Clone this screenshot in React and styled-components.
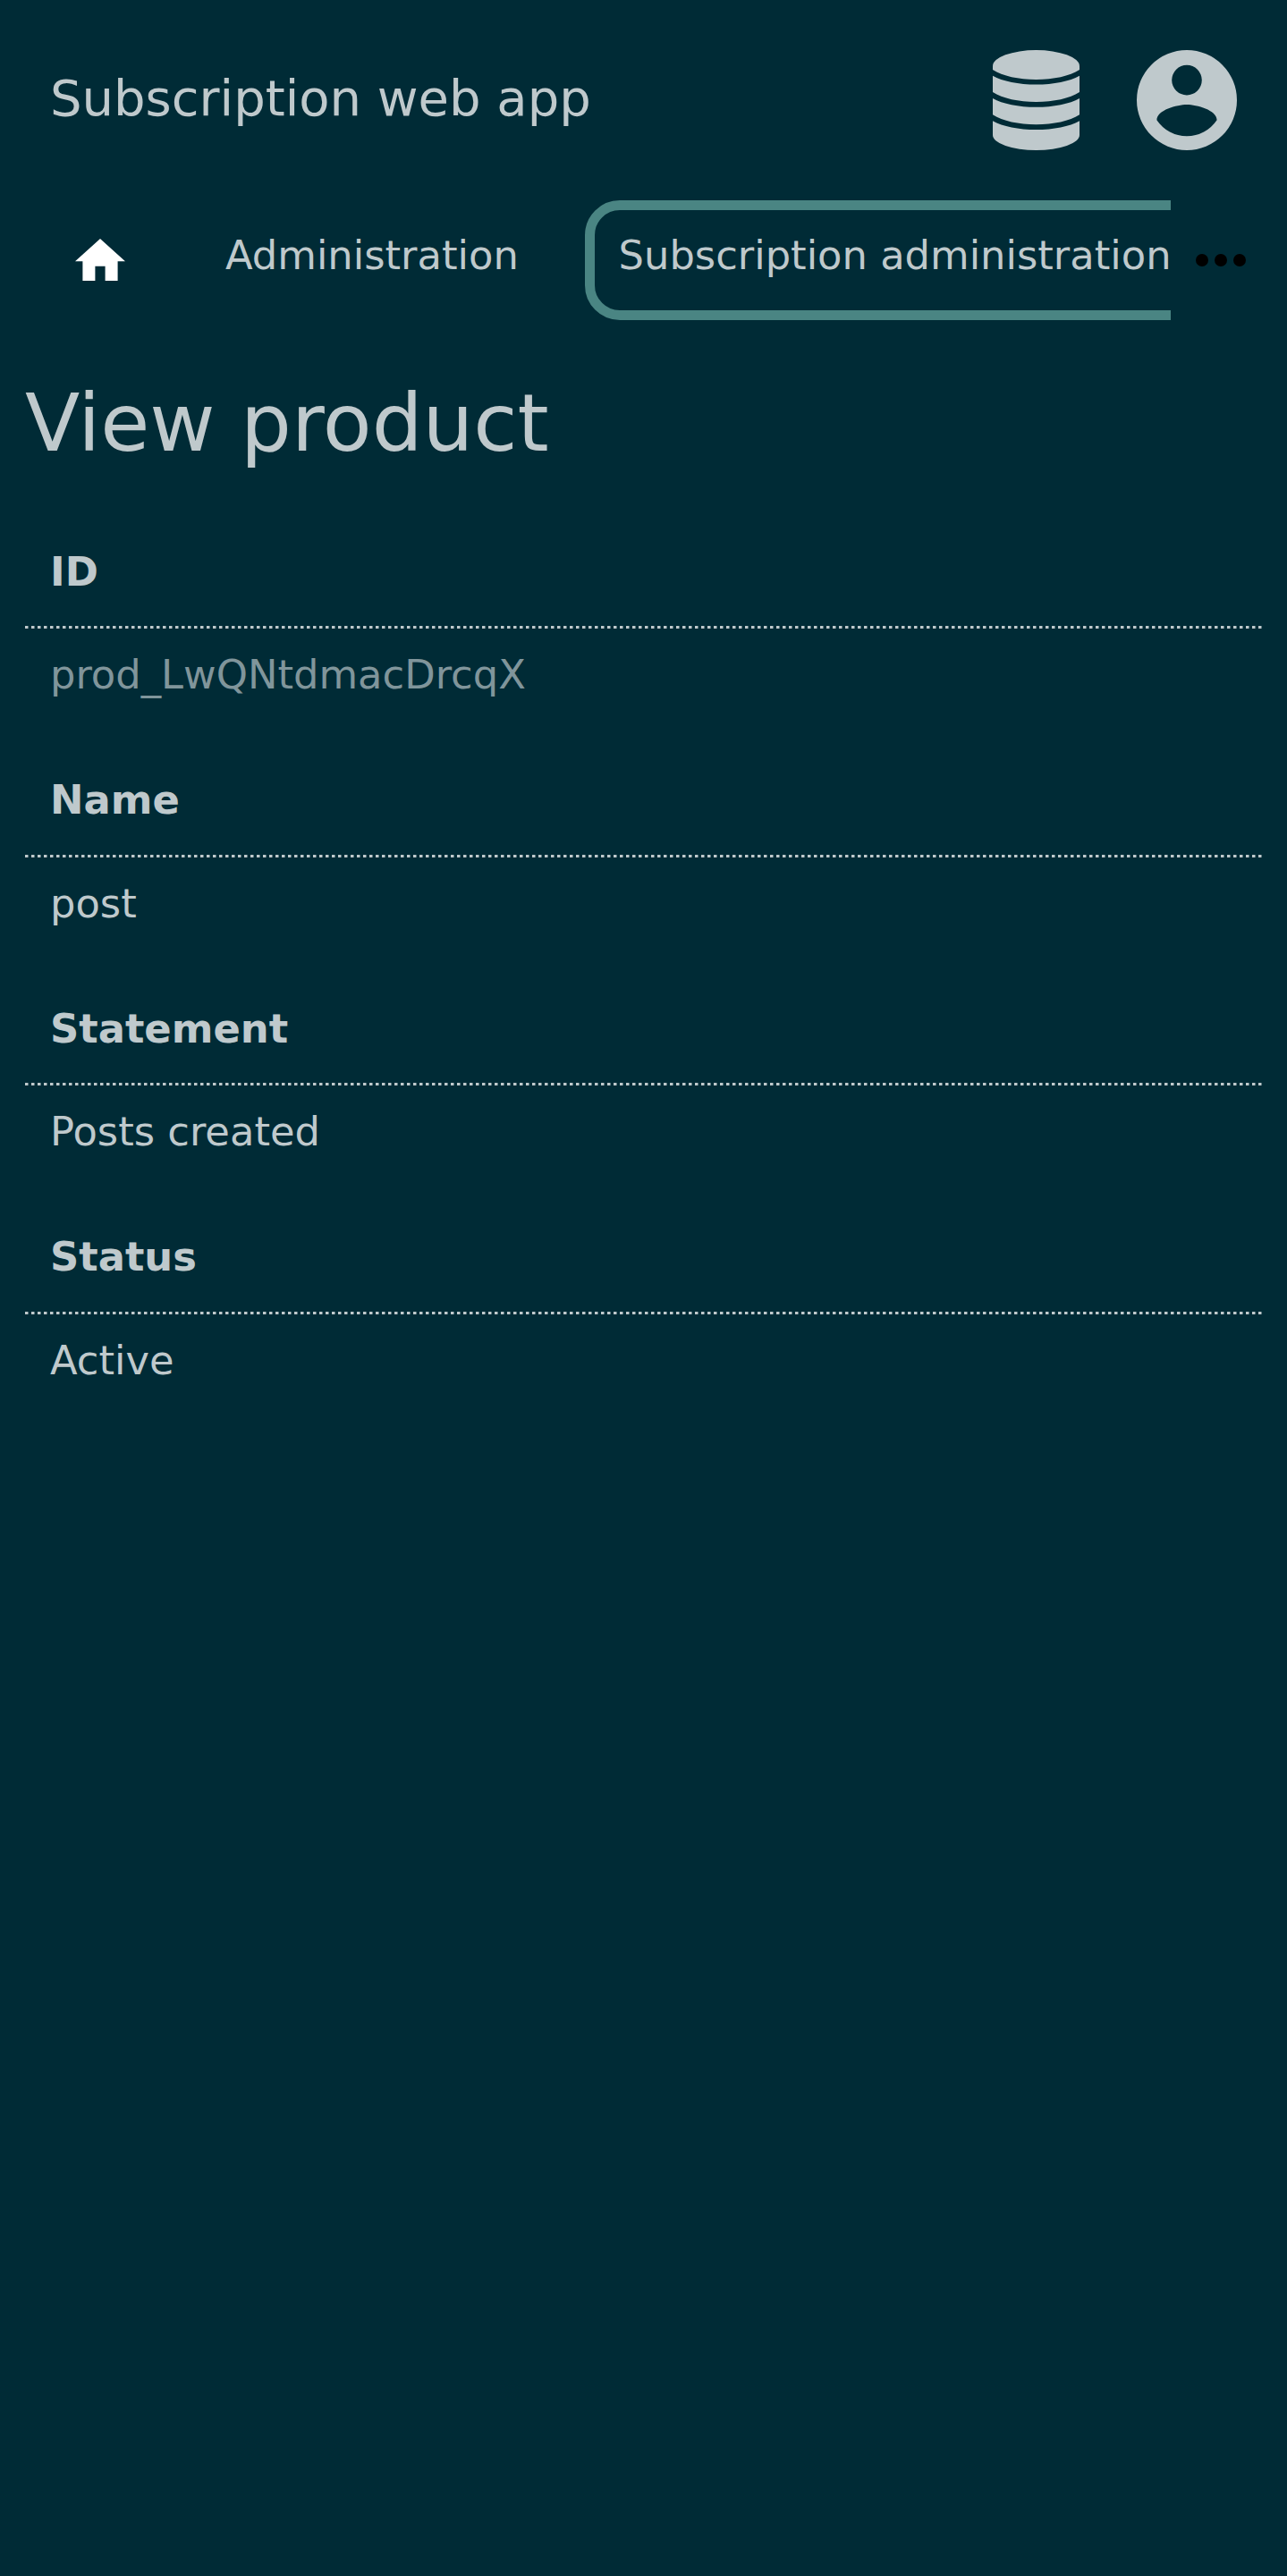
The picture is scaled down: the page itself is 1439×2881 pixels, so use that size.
import React from 'react';
import styled, { createGlobalStyle } from 'styled-components';

const Global = createGlobalStyle`
  html, body { margin: 0; background: #002b36; }
  body { color: #bfc9cc; font-family: "DejaVu Sans", sans-serif; font-size: 44.8px; line-height: 53px; }
`;

const Page = styled.div`
  min-height: 2881px;
  overflow: hidden;
`;

const Header = styled.header`
  display: flex;
  align-items: center;
  height: 224px;
  box-sizing: border-box;
  padding: 0 56px;
`;

const AppName = styled.div`
  flex: 1;
  font-size: 56px;
  line-height: 65px;
  padding-bottom: 5px;
`;

const DatabaseIcon = styled.svg`
  width: 97px;
  height: 112px;
  margin-right: 64px;
  fill: #bfc9cc;
`;

const AccountIcon = styled.svg`
  width: 112px;
  height: 112px;
  fill: #bfc9cc;
`;

const NavBar = styled.div`
  display: flex;
  height: 134px;
`;

const Tabs = styled.nav`
  display: flex;
  flex: 1;
  min-width: 0;
  overflow: hidden;
`;

const Tab = styled.a`
  flex: none;
  box-sizing: border-box;
  height: 134px;
  margin-right: 36.6px;
  padding: 24px 26.6px 0;
  border: 11px solid ${(p) => (p.$active ? '#4a8583' : 'transparent')};
  border-radius: 39px;
  white-space: nowrap;
`;

const HomeTab = styled.a`
  flex: none;
  display: flex;
  align-items: center;
  width: 214.4px;
  box-sizing: border-box;
  padding: 0 0 1px 84px;
`;

const HomeIcon = styled.svg`
  width: 56px;
  height: 47.6px;
  fill: #fff;
`;

const More = styled.button`
  display: flex;
  align-items: center;
  width: 130px;
  border: 0;
  padding: 0 0 1px 28px;
  background: none;
`;

const MoreIcon = styled.svg`
  width: 56px;
  height: 14px;
  fill: #000;
`;

const Main = styled.main`
  padding: 63px 28px 0;
`;

const Title = styled.h1`
  margin: 0 0 87.7px;
  font-size: 89.6px;
  font-weight: 400;
  line-height: 104px;
`;

const Field = styled.section`
  height: 255.5px;
`;

const Label = styled.div`
  box-sizing: border-box;
  height: 87.6px;
  padding: 0 28px;
  font-weight: 700;
`;

const DottedRule = styled.div`
  height: 3px;
  background: repeating-linear-gradient(
    to right,
    #bfc9cc 0 3px,
    #607a81 3px 4px,
    transparent 4px 7px
  );
`;

const Value = styled.div`
  padding: 24.8px 28px 0;
  color: ${(p) => (p.$muted ? '#80959b' : '#bfc9cc')};
`;

const fields = [
  { label: 'ID', value: 'prod_LwQNtdmacDrcqX', muted: true },
  { label: 'Name', value: 'post' },
  { label: 'Statement', value: 'Posts created' },
  { label: 'Status', value: 'Active' },
];

export default function App() {
  return (
    <Page>
      <Global />
      <Header>
        <AppName>Subscription web app</AppName>
        <DatabaseIcon viewBox="0 0 97 112">
          <path d="M0 18A48.500 18 0 0 1 97 18V22C86 29 68 33 48.500 33S11 29 0 22z" />
          <path d="M0 28.700C11 35 29 38.500 48.500 38.500S86 35 97 28.700V47C86 54 68 58 48.500 58S11 54 0 47z" />
          <path d="M0 54C11 60.300 29 63.800 48.500 63.800S86 60.300 97 54V72.200C86 79.200 68 83.200 48.500 83.200S11 79.200 0 72.200z" />
          <path d="M0 79.200C11 85.500 29 89 48.500 89S86 85.500 97 79.200V95A48.500 17 0 0 1 0 95z" />
        </DatabaseIcon>
        <AccountIcon viewBox="0 0 20 20">
          <path fillRule="evenodd" d="M10 0a10 10 0 1 0 0 20a10 10 0 1 0 0-20zm0 3a3 3 0 1 1 0 6a3 3 0 0 1 0-6zm0 14.2a7.2 7.2 0 0 1-6-3.220c.03-1.990 4-3.080 6-3.080c1.990 0 5.970 1.090 6 3.080a7.200 7.200 0 0 1-6 3.220z" />
        </AccountIcon>
      </Header>
      <NavBar>
        <Tabs>
          <HomeTab>
            <HomeIcon viewBox="2 3 20 17">
              <path d="M10 20v-6h4v6h5v-8h3L12 3 2 12h3v8z" />
            </HomeIcon>
          </HomeTab>
          <Tab>Administration</Tab>
          <Tab $active>Subscription administration</Tab>
        </Tabs>
        <More aria-label="More">
          <MoreIcon viewBox="0 0 56 14">
            <circle cx="7" cy="7" r="7" />
            <circle cx="28" cy="7" r="7" />
            <circle cx="49" cy="7" r="7" />
          </MoreIcon>
        </More>
      </NavBar>
      <Main>
        <Title>View product</Title>
        {fields.map((f) => (
          <Field key={f.label}>
            <Label>{f.label}</Label>
            <DottedRule />
            <Value $muted={f.muted}>{f.value}</Value>
          </Field>
        ))}
      </Main>
    </Page>
  );
}
